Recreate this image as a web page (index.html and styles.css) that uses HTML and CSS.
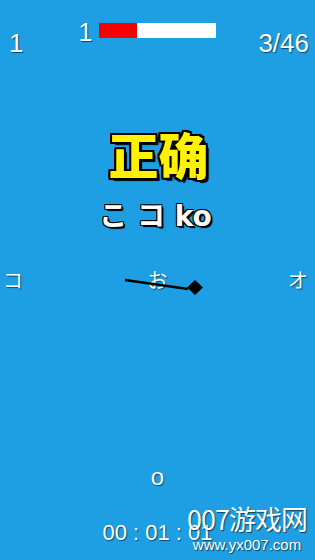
FILE: index.html
```html
<!DOCTYPE html>
<html lang="zh">
<head>
	<meta charset="UTF-8">
	<title>五十音</title>
	<link rel="stylesheet" href="styles.css">
</head>
<body>
	<div class="screen">
		<div class="top">
			<span class="lives">1</span>
			<div class="meter">
				<span class="lvl">1</span>
				<div class="bar"><div class="fill" style="width:32.5%"></div></div>
			</div>
			<span class="count">3/46</span>
		</div>
		<div class="result">正确</div>
		<div class="answer">こ コ ko</div>
		<div class="choices">
			<span class="opt">コ</span>
			<span class="opt mid">お
				<svg class="needle" width="80" height="24" viewBox="0 0 80 24">
					<line x1="2" y1="5" x2="65" y2="14" stroke="#000" stroke-width="2.5"/>
					<polygon points="72,5 80,12.5 72,20 64,12.5" fill="#000"/>
				</svg>
			</span>
			<span class="opt">オ</span>
		</div>
		<div class="roma">o</div>
		<div class="timer">00 : 01 : 01</div>
		<div class="mark">
			<div class="mark-big">007游戏网</div>
			<div class="mark-url">www.yx007.com</div>
		</div>
	</div>
</body>
</html>
```

FILE: styles.css
```css
*{margin:0;padding:0;box-sizing:border-box;}
body{background-color:#1e9fe4;font-family:"Liberation Sans","Noto Sans CJK SC",sans-serif;color:#fff;}
.screen{width:315px;height:560px;position:relative;display:flex;flex-direction:column;overflow:hidden;}
.top{display:flex;justify-content:space-between;align-items:flex-start;padding:18px 6px 0 9px;height:60px;}
.lives,.count,.lvl,.opt,.roma,.timer{text-shadow:1px 1px 1px rgba(0,0,0,0.55);}
.lives{font-size:26px;line-height:30px;margin-top:10px;}
.count{font-size:26px;line-height:30px;margin-top:10px;}
.meter{display:flex;align-items:flex-start;gap:7px;margin-left:55px;margin-right:auto;}
.lvl{font-size:25px;line-height:26px;margin-top:1px;}
.bar{width:117px;height:15px;background-color:#fff;margin-top:5px;}
.fill{height:100%;background-color:#f70000;}
.result{margin-top:66px;text-align:center;font-family:"Noto Sans CJK SC",sans-serif;font-weight:900;font-size:50px;line-height:54px;color:#fff200;padding-left:2px;
	text-shadow:-2px -2px 0 #000,2px -2px 0 #000,-2px 2px 0 #000,2px 2px 0 #000,0 2px 0 #000,0 -2px 0 #000,2px 0 0 #000,-2px 0 0 #000,3px 3px 1px #000;}
.answer{margin-top:19px;text-align:center;font-family:"DejaVu Sans","Noto Sans CJK JP",sans-serif;font-weight:bold;font-size:28px;line-height:36px;padding-right:4px;
	text-shadow:1px 1px 0 #000,-1px -1px 0 #000,1px -1px 0 #000,-1px 1px 0 #000,2px 2px 1px #000;}
.choices{display:flex;justify-content:space-between;margin-top:31px;padding:0 7px 0 3px;}
.opt{font-family:"Noto Sans CJK JP",sans-serif;font-size:20px;line-height:28px;}
.mid{position:relative;margin-left:4px;}
.needle{position:absolute;left:-25px;top:9px;}
.roma{margin-top:170px;text-align:center;font-size:24px;line-height:26px;}
.timer{margin-top:30px;text-align:center;font-size:22px;line-height:26px;}
.mark{position:absolute;left:187px;top:503px;text-align:center;}
.mark-big{font-family:"Noto Sans CJK SC",sans-serif;font-size:27px;line-height:32px;letter-spacing:-1px;text-shadow:1px 1px 1px rgba(0,0,0,0.6);}
.mark-url{font-size:15px;line-height:18px;margin-top:1px;text-shadow:1px 1px 1px rgba(0,0,0,0.6);}
```
